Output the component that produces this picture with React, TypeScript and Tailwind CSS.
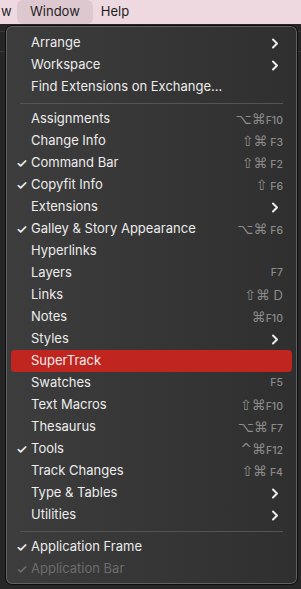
import React from "react";

type Item =
  | { sep: true }
  | { label: string; check?: boolean; sub?: boolean; sym?: string; key?: string; disabled?: boolean; active?: boolean; big?: boolean };

const items: Item[] = [
  { label: "Arrange", sub: true },
  { label: "Workspace", sub: true },
  { label: "Find Extensions on Exchange..." },
  { sep: true },
  { label: "Assignments", sym: "⌥⌘", key: "F10" },
  { label: "Change Info", sym: "⇧⌘", key: " F3" },
  { label: "Command Bar", check: true, sym: "⇧⌘", key: " F2" },
  { label: "Copyfit Info", check: true, sym: "⇧", key: " F6" },
  { label: "Extensions", sub: true },
  { label: "Galley & Story Appearance", check: true, sym: "⌥⌘", key: " F6" },
  { label: "Hyperlinks" },
  { label: "Layers", key: "F7" },
  { label: "Links", sym: "⇧⌘", key: " D", big: true },
  { label: "Notes", sym: "⌘", key: "F10" },
  { label: "Styles", sub: true },
  { label: "SuperTrack", active: true },
  { label: "Swatches", key: "F5" },
  { label: "Text Macros", sym: "⇧⌘", key: "F10" },
  { label: "Thesaurus", sym: "⌥⌘", key: " F7" },
  { label: "Tools", check: true, sym: "^⌘", key: "F12" },
  { label: "Track Changes", sym: "⇧⌘", key: " F4" },
  { label: "Type & Tables", sub: true },
  { label: "Utilities", sub: true },
  { sep: true },
  { label: "Application Frame", check: true },
  { label: "Application Bar", check: true, disabled: true },
];

const Chevron = () => (
  <svg width="8" height="11" viewBox="0 0 8 11" className="block">
    <path d="M2 1.5 L6 5.5 L2 9.5" fill="none" stroke="#ececec" strokeWidth="2" strokeLinecap="round" strokeLinejoin="round" />
  </svg>
);

export default function App() {
  return (
    <div
      className="relative w-[301px] h-[589px] overflow-hidden bg-[#262626]"
      style={{ fontFamily: "Inter, 'Noto Sans', sans-serif" }}
    >
      <div className="h-6 bg-[#eed9e0] flex items-center text-[13px] text-[#1e1e1e]">
        <span className="w-[17px] pl-[1px]">w</span>
        <span className="h-6 px-[13px] flex items-center rounded-[6px] bg-[#dec8cf]">Window</span>
        <span className="ml-[8px]">Help</span>
      </div>
      <div className="h-[8px] border-b border-[#3a3a3a]" />
      <div className="h-[20px] border-b border-[#3a3a3a]" />

      <div className="absolute left-[5px] top-[25px] w-[293px] h-[560px] rounded-[7px] border border-[#0d0d0d] shadow-[0_0_0_1px_#626262_inset] bg-gradient-to-r from-[#3d3d3d] to-[#2f2f2f] pt-[6px] px-[5px]">
        {items.map((it, i) =>
          "sep" in it ? (
            <div key={i} className="h-[10px] flex items-center px-[9px]">
              <div className="h-px w-full bg-[#545454]" />
            </div>
          ) : (
            <div
              key={i}
              className={
                "h-[22px] flex items-center rounded-[4px] text-[13px] " +
                (it.active ? "bg-[#c02520] " : "") +
                (it.disabled ? "text-[#6c6c6c]" : "text-[#ececec]")
              }
            >
              <span className="w-[20px] pl-[5px] text-[13px] leading-none font-semibold">{it.check ? "✓" : ""}</span>
              <span className="flex-1 whitespace-nowrap">{it.label}</span>
              {it.sub && (
                <span className="mr-[13px]">
                  <Chevron />
                </span>
              )}
              {(it.sym || it.key) && (
                <span className="mr-[9px] flex items-baseline text-[#8b8b8b] whitespace-pre">
                  {it.sym && (
                    <span className="text-[14px]" style={{ fontFamily: "'DejaVu Sans', sans-serif" }}>
                      {it.sym}
                    </span>
                  )}
                  {it.key && (
                    <span className={it.big ? "text-[13px]" : "text-[10.5px] font-medium"}>{it.key}</span>
                  )}
                </span>
              )}
            </div>
          )
        )}
      </div>
    </div>
  );
}
